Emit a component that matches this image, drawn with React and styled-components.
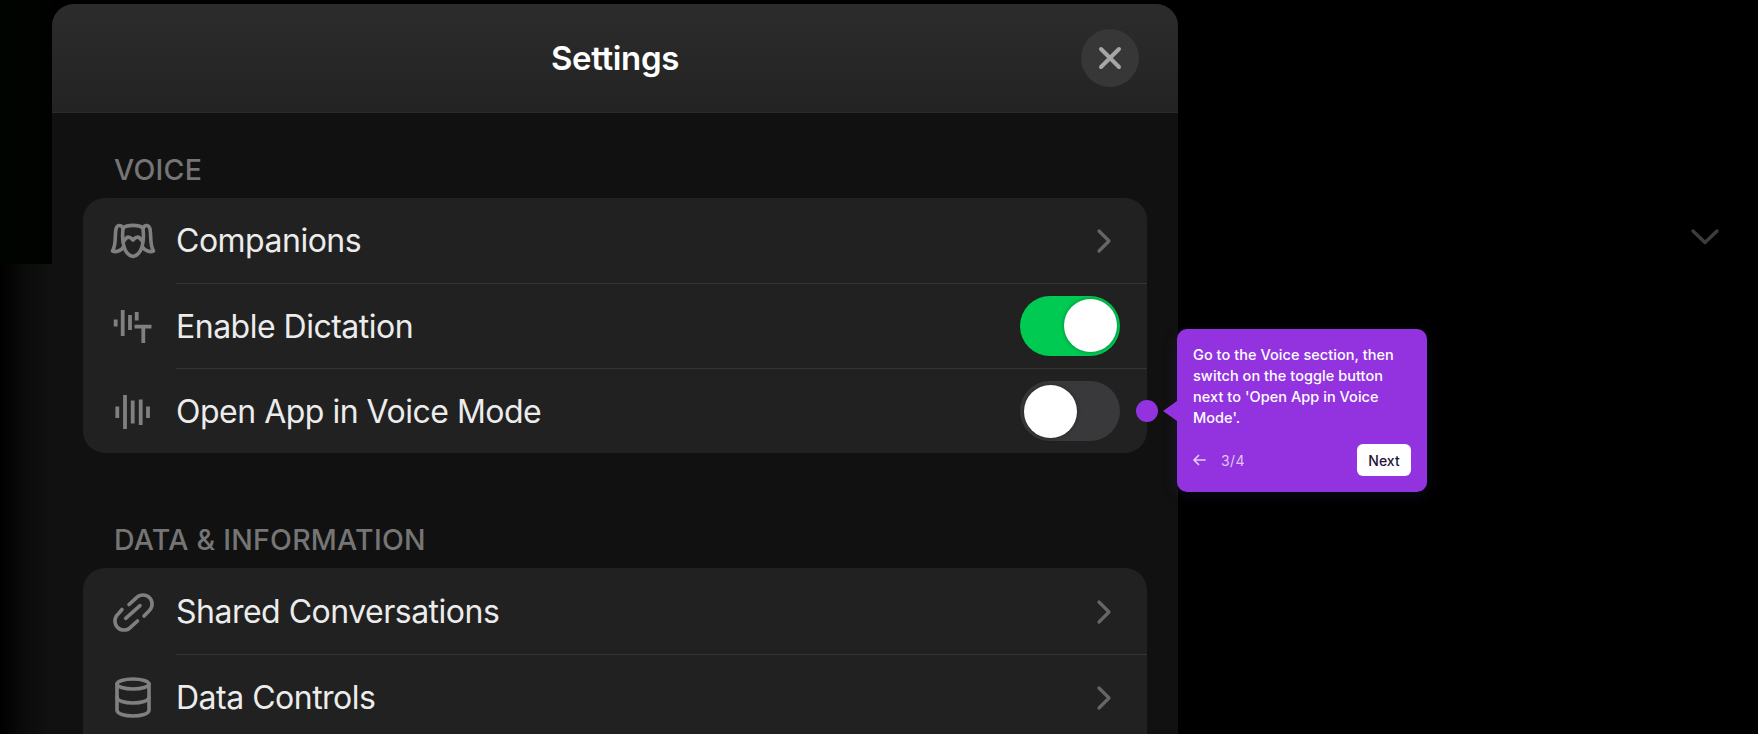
import React from 'react';
import styled, { createGlobalStyle } from 'styled-components';

const Global = createGlobalStyle`
  html, body { margin: 0; padding: 0; background: #000; }
  #root { height: 734px; overflow: hidden; }
`;

const Page = styled.div`
  position: relative;
  width: 1758px;
  height: 734px;
  overflow: hidden;
  box-sizing: border-box;
  padding: 4px 0 0 52px;
  font-family: Inter, "Liberation Sans", sans-serif;
  background:
    linear-gradient(to right, #000 0, #0b0b0b 24px, #111 52px) no-repeat 0 264px / 52px 470px,
    linear-gradient(to right, #000400, #000200) no-repeat 0 0 / 52px 264px,
    #000;
`;

const Modal = styled.div`
  width: 1126px;
  height: 760px;
  background: #111;
  border-radius: 22px 22px 0 0;
  overflow: hidden;
`;

const Header = styled.header`
  height: 108px;
  border-bottom: 1px solid #2b2b2b;
  background: linear-gradient(180deg, #2c2c2c 0%, #232323 100%);
  display: flex;
  align-items: center;
  justify-content: center;
  position: relative;
  box-sizing: content-box;
`;

const Title = styled.h1`
  margin: 0;
  font-size: 33px;
  line-height: 40px;
  font-weight: 570;
  letter-spacing: -0.35px;
  color: #fff;
`;

const CloseButton = styled.button`
  position: absolute;
  right: 39px;
  top: 25px;
  width: 58px;
  height: 58px;
  border: 0;
  padding: 0;
  border-radius: 50%;
  background: #373737;
  display: flex;
  align-items: center;
  justify-content: center;
`;

const Body = styled.div`
  padding: 0 31px;
`;

const SectionLabel = styled.div`
  color: #757575;
  font-size: 28.5px;
  line-height: 34px;
  font-weight: 500;
  letter-spacing: 0.25px;
  padding: 40px 0 10.5px 31px;
`;

const SecondLabel = styled(SectionLabel)`
  padding: 69.5px 0 11.5px 31px;
`;

const Card = styled.div`
  background: #212121;
  border-radius: 22px;
  overflow: hidden;
  padding-bottom: ${p => (p.$continues ? '60px' : '0')};
`;

const Row = styled.div`
  display: flex;
  align-items: stretch;
  height: 85.33px;
  padding-left: 22px;
`;

const IconSlot = styled.div`
  flex: 0 0 56px;
  display: flex;
  align-items: center;
  justify-content: center;
  margin-right: 15px;
  padding-top: 2px;
`;

const RowBody = styled.div`
  flex: 1;
  display: flex;
  align-items: center;
  justify-content: space-between;
  padding-right: 27px;
  border-top: ${p => (p.$first ? '0' : '1px solid #353535')};
`;

const RowLabel = styled.span`
  color: #ececec;
  font-size: 32px;
  line-height: 40px;
  font-weight: 400;
  letter-spacing: -0.5px;
  padding-top: 2px;
`;

const ChevronWrap = styled.span`
  display: flex;
  width: 24px;
  justify-content: center;
  margin-right: 4px;
  padding-top: 2px;
`;

const Track = styled.div`
  width: 100px;
  height: 60px;
  border-radius: 30px;
  box-sizing: border-box;
  padding: 3.5px;
  display: flex;
  justify-content: ${p => (p.$on ? 'flex-end' : 'flex-start')};
  background: ${p => (p.$on ? '#00ca52' : '#39393b')};
`;

const Thumb = styled.div`
  width: 53px;
  height: 53px;
  border-radius: 50%;
  background: #fff;
  box-shadow: 0 0 4px rgba(0, 0, 0, 0.35);
`;

const Beacon = styled.div`
  position: absolute;
  left: 1135.5px;
  top: 400px;
  width: 22px;
  height: 22px;
  border-radius: 50%;
  background: #9333e0;
`;

const Tooltip = styled.div`
  position: absolute;
  left: 1177px;
  top: 329px;
  width: 250px;
  height: 163px;
  box-sizing: border-box;
  padding: 15px 16px 16px;
  background: #9333e0;
  border-radius: 10px;
  box-shadow: 0 4px 16px rgba(60, 60, 150, 0.18);
  display: flex;
  flex-direction: column;
  justify-content: space-between;
  font-family: Inter, sans-serif;
  &::before {
    content: '';
    position: absolute;
    left: -14px;
    top: 72px;
    border-style: solid;
    border-width: 10.5px 14px 10.5px 0;
    border-color: transparent #9333e0 transparent transparent;
  }
`;

const TipText = styled.p`
  margin: 0;
  color: #fff;
  font-size: 14.5px;
  line-height: 21px;
  font-weight: 450;
  letter-spacing: 0.05px;
`;

const TipFooter = styled.div`
  display: flex;
  align-items: center;
  justify-content: space-between;
`;

const TipNav = styled.div`
  display: flex;
  align-items: center;
  gap: 15px;
  color: rgba(255, 255, 255, 0.72);
  font-size: 14px;
  letter-spacing: 0.4px;
`;

const NextButton = styled.button`
  width: 54px;
  height: 32px;
  border: 0;
  padding: 0;
  border-radius: 6px;
  background: #fff;
  color: #1d1438;
  font-family: Inter, sans-serif;
  font-size: 14px;
  font-weight: 500;
`;

const PageChevron = styled.svg`
  position: absolute;
  left: 1690px;
  top: 227px;
`;

const stroke = { fill: 'none', stroke: '#808080', strokeWidth: 3.6, strokeLinecap: 'round', strokeLinejoin: 'round' };

const Icon = ({ children }) => (
  <svg width="56" height="46" viewBox="0 0 56 46" {...stroke}>{children}</svg>
);

const Companions = () => (
  <Icon>
    <path d="M18 10 C16 6.500 12 6.500 11 11 C9.500 19 11.500 26 7.500 33 C11 34.500 16 33 18.500 29" />
    <path d="M38 10 C40 6.500 44 6.500 45 11 C46.500 19 44.500 26 48.500 33 C45 34.500 40 33 37.500 29" />
    <path d="M18 10 C22 6.500 34 6.500 38 10" />
    <path d="M18 11 C16.500 24 19 37 28 38.500 C37 37 39.500 24 38 11" />
    <path d="M19 23 C22 17.500 25 18.500 28 22 C31 18.500 34 17.500 37 23" />
  </Icon>
);

const Dictation = () => (
  <Icon>
    <path d="M10.700 16.500V23.500M17.700 7V33M25 12V27M31.700 9V17.500M29.500 23.700H46.500M38.300 23.700V40" strokeLinecap="butt" strokeWidth="3.800" />
  </Icon>
);

const Wave = () => (
  <Icon>
    <path d="M12.300 17.500V29M20 6V40M27.700 11.500V34.500M35.700 10.500V36M43 17.500V29" strokeLinecap="butt" strokeWidth="3.800" />
  </Icon>
);

const LinkIcon = () => (
  <Icon>
    <path d="M24 15.500 L31.600 8.600 A9 9 0 0 1 44.400 21.400 L39 27" />
    <path d="M17 20.500 L12.600 25.600 A9 9 0 0 0 25.400 38.400 L32.500 32" />
    <path d="M20.700 29.300 L35 16.700" />
  </Icon>
);

const Database = () => (
  <Icon>
    <ellipse cx="28" cy="10" rx="16" ry="5" />
    <path d="M12 10 V36 C12 40 20 42 28 42 C36 42 44 40 44 36 V10" />
    <path d="M12 23 C12 27 20 29 28 29 C36 29 44 27 44 23" />
  </Icon>
);

const Chevron = () => (
  <svg width="16" height="26" viewBox="0 0 16 26" fill="none" stroke="#666" strokeWidth="3.2" strokeLinecap="round" strokeLinejoin="round">
    <path d="M3 3 L13 13 L3 23" />
  </svg>
);

const rowsA = [
  { icon: <Companions />, label: 'Companions', end: <ChevronWrap><Chevron /></ChevronWrap> },
  { icon: <Dictation />, label: 'Enable Dictation', end: <Track $on><Thumb /></Track> },
  { icon: <Wave />, label: 'Open App in Voice Mode', end: <Track><Thumb /></Track> },
];

const rowsB = [
  { icon: <LinkIcon />, label: 'Shared Conversations', end: <ChevronWrap><Chevron /></ChevronWrap> },
  { icon: <Database />, label: 'Data Controls', end: <ChevronWrap><Chevron /></ChevronWrap> },
];

const Rows = ({ rows, continues }) => (
  <Card $continues={continues}>
    {rows.map((r, i) => (
      <Row key={r.label}>
        <IconSlot>{r.icon}</IconSlot>
        <RowBody $first={i === 0}>
          <RowLabel>{r.label}</RowLabel>
          {r.end}
        </RowBody>
      </Row>
    ))}
  </Card>
);

export default function App() {
  return (
    <>
      <Global />
      <Page>
        <Modal>
          <Header>
            <Title>Settings</Title>
            <CloseButton aria-label="Close">
              <svg width="24" height="24" viewBox="0 0 24 24" fill="none" stroke="#a6a6a6" strokeWidth="4" strokeLinecap="round">
                <path d="M3 3 L21 21 M21 3 L3 21" />
              </svg>
            </CloseButton>
          </Header>
          <Body>
            <SectionLabel>VOICE</SectionLabel>
            <Rows rows={rowsA} />
            <SecondLabel>DATA &amp; INFORMATION</SecondLabel>
            <Rows rows={rowsB} continues />
          </Body>
        </Modal>

        <PageChevron width="30" height="20" viewBox="0 0 30 20" fill="none" stroke="#3c3c3c" strokeWidth="3.4" strokeLinecap="round" strokeLinejoin="round">
          <path d="M3 4 L15 15.500 L27 4" />
        </PageChevron>

        <Beacon />
        <Tooltip>
          <TipText>Go to the Voice section, then switch on the toggle button next to 'Open App in Voice Mode'.</TipText>
          <TipFooter>
            <TipNav>
              <svg width="13" height="12" viewBox="0 0 13 12" fill="none" stroke="#e2cdf6" strokeWidth="1.700" strokeLinecap="round" strokeLinejoin="round">
                <path d="M1 6 H12 M5.500 1.500 L1 6 L5.500 10.500" />
              </svg>
              <span>3/4</span>
            </TipNav>
            <NextButton>Next</NextButton>
          </TipFooter>
        </Tooltip>
      </Page>
    </>
  );
}
